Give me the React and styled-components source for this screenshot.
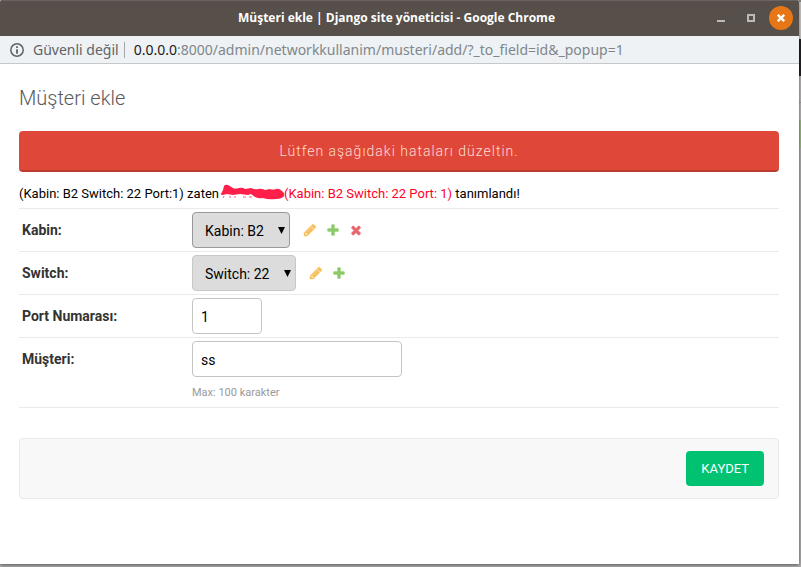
import React from "react";
import styled, { createGlobalStyle } from "styled-components";

const GlobalStyle = createGlobalStyle`
  *, *::before, *::after { box-sizing: border-box; }
  body {
    margin: 0;
    font-family: Roboto, "Liberation Sans", sans-serif;
    font-size: 13px;
    color: #000;
  }
`;

const Desktop = styled.div`
  display: flex;
  min-height: 100vh;
  padding: 0 2px 3px 0;
  background: linear-gradient(
    #8b8783 0 2px, #d4d2d0 2px 39px, #242224 39px 76px, #bdbbbc 76px 102px,
    #a09e9f 102px 103px, #bdbbbc 103px 120px, #9fbd85 120px 148px, #b3b1b2 148px 100%
  );
`;

const Window = styled.div`
  flex: 1;
  min-width: 0;
  background: #fff;
  box-shadow: 0 1px 4px rgba(0, 0, 0, 0.55);
`;

const TitleBar = styled.header`
  display: grid;
  grid-template-columns: 1fr auto 1fr;
  align-items: center;
  height: 36px;
  padding-right: 6px;
  background: #574f4a;
  box-shadow: inset 0 1px #6b635f;
  border-radius: 2px 2px 0 0;
`;

const WindowTitle = styled.div`
  grid-column: 2;
  font: 700 12px/20px "Open Sans", "Noto Sans", sans-serif;
  color: #fff;
  white-space: nowrap;
`;

const WindowControls = styled.div`
  display: flex;
  justify-content: flex-end;
  gap: 6px;
`;

const WindowButton = styled.button`
  display: grid;
  place-items: center;
  width: 24px;
  height: 24px;
  padding: 0;
  border: 0;
  border-radius: 50%;
  color: ${(p) => (p.$close ? "#fff" : "#bdb9b6")};
  background: ${(p) => (p.$close ? "#e67616" : "transparent")};
`;

const AddressBar = styled.div`
  display: flex;
  align-items: center;
  height: 28px;
  padding: 0 10px;
  background: #eef2f4;
  border-bottom: 1px solid #c6c8ca;
  font: 14px/20px "Noto Sans", sans-serif;
  color: #5f6368;
  white-space: nowrap;
`;

const Security = styled.span`
  margin-left: 9px;
  padding-right: 5px;
`;

const Divider = styled.span`
  width: 1px;
  height: 16px;
  margin-right: 9px;
  background: #a3a7aa;
`;

const Url = styled.span`
  color: #80868b;
`;

const Host = styled.span`
  color: #202124;
`;

const Content = styled.main`
  padding: 18px 20px 64px 19px;
`;

const Heading = styled.h1`
  margin: 0 0 17px;
  font-size: 20px;
  line-height: 32px;
  font-weight: 300;
  color: #5a5a5a;
`;

const ErrorBanner = styled.p`
  margin: 0 0 12px;
  padding: 10px 10px 8px;
  border-bottom: 2px solid #b93c2e;
  border-radius: 4px;
  background: #df4838;
  color: #ffdcd6;
  font-size: 14px;
  font-weight: 300;
  line-height: 21px;
  letter-spacing: 1px;
  text-align: center;
`;

const RecordError = styled.div`
  display: flex;
  align-items: center;
  height: 25px;
  padding-bottom: 5px;
  border-bottom: 1px solid #eaeaea;
  line-height: 19px;
  white-space: pre;
`;

const Duplicate = styled.span`
  display: flex;
  align-items: center;
  margin-left: 1px;
  color: #ff0026;
`;

const Row = styled.div`
  display: flex;
  align-items: flex-start;
  padding: 3px;
  border-bottom: 1px solid #eaeaea;
`;

const Label = styled.label`
  width: 170px;
  flex: none;
  font-size: 14px;
  font-weight: 700;
  line-height: 36px;
  color: #333;
`;

const Field = styled.div`
  display: flex;
  flex-direction: column;
`;

const Related = styled.div`
  display: flex;
  align-items: center;
  gap: 9px;
`;

const SelectWrap = styled.div`
  display: grid;
  align-items: center;
  margin-right: 4px;

  select, svg { grid-area: 1 / 1; }
  svg {
    justify-self: end;
    margin-right: 5px;
    pointer-events: none;
  }
`;

const Select = styled.select`
  appearance: none;
  height: 36px;
  padding: 2px 25px 0 12px;
  border: 1px solid ${(p) => (p.$active ? "#999" : "#c8c8c8")};
  border-radius: 4px;
  background: #dcdcdc;
  color: #000;
  font: 14px Roboto, sans-serif;
`;

const TextInput = styled.input`
  width: ${(p) => (p.$short ? "70px" : "210px")};
  height: 36px;
  padding: 2px 8px 0;
  border: 1px solid #c4c4c4;
  border-radius: 4px;
  background: #fff;
  color: #000;
  font: 14px Roboto, sans-serif;
`;

const Help = styled.p`
  margin: 8px 0 3px;
  font-size: 11px;
  line-height: 16px;
  color: #999;
`;

const IconLink = styled.a`
  display: flex;
  color: ${(p) => p.$tone};
`;

const SubmitRow = styled.div`
  display: flex;
  justify-content: flex-end;
  margin-top: 30px;
  padding: 12px 14px;
  border: 1px solid #eaeaea;
  border-radius: 4px;
  background: #f8f8f8;
`;

const SubmitButton = styled.button`
  height: 35px;
  padding: 0 15px;
  border: 0;
  border-radius: 4px;
  background: #00c271;
  color: #fff;
  font: 13px Roboto, sans-serif;
`;

const ICONS = {
  change: "M491 1536l91-91-235-235-91 91v107h128v128h107zm523-928q0-22-22-22-10 0-17 7l-542 542q-7 7-7 17 0 22 22 22 10 0 17-7l542-542q7-7 7-17zm-54-192l416 416-832 832h-416v-416zm683 96q0 53-37 90l-166 166-416-416 166-165q36-38 90-38 53 0 91 38l235 234q37 39 37 91z",
  add: "M1600 796v192q0 40-28 68t-68 28h-416v416q0 40-28 68t-68 28h-192q-40 0-68-28t-28-68v-416h-416q-40 0-68-28t-28-68v-192q0-40 28-68t68-28h416v-416q0-40 28-68t68-28h192q40 0 68 28t28 68v416h416q40 0 68 28t28 68z",
  remove: "M1490 1322q0 40-28 68l-136 136q-28 28-68 28t-68-28l-294-294-294 294q-28 28-68 28t-68-28l-136-136q-28-28-28-68t28-68l294-294-294-294q-28-28-28-68t28-68l136-136q28-28 68-28t68 28l294 294 294-294q28-28 68-28t68 28l136 136q28 28 28 68t-28 68l-294 294 294 294q28 28 28 68z",
};
const TONES = { change: "#f7bf5c", add: "#8acb67", remove: "#e8666b" };
const NAMES = { change: "Değiştir", add: "Ekle", remove: "Sil" };

function Action({ kind }) {
  return (
    <IconLink href="#" aria-label={NAMES[kind]} $tone={TONES[kind]}>
      <svg width="14" height="14" viewBox="0 0 1792 1792" fill="currentColor" aria-hidden="true">
        <path d={ICONS[kind]} stroke="currentColor" strokeWidth="50" />
      </svg>
    </IconLink>
  );
}

function RelatedSelect({ id, value, active, actions }) {
  return (
    <Related>
      <SelectWrap>
        <Select id={id} $active={active} defaultValue={value}>
          <option>{value}</option>
        </Select>
        <svg width="7" height="7" viewBox="0 0 7 7" aria-hidden="true">
          <path d="M0 0h7L3.5 7z" />
        </svg>
      </SelectWrap>
      {actions.map((kind) => <Action key={kind} kind={kind} />)}
    </Related>
  );
}

function Scribble() {
  return (
    <svg width="64" height="19" viewBox="0 0 64 19" overflow="visible" aria-hidden="true">
      <path
        d="M1 10l2-4 1-4q1-2 4-1l5 3q2 1 6 0t6 1l6-1q4 2 7 1t7 1l5-1q3 1 6 0t6 2q3 2 2 5-2 3-8 3-8 1-13-1-4 1-8-1l-4-3-3 1-8-1-7 1-6-1-4 1q-3 0-2-2z"
        fill="#ff1f4b"
      />
      <path d="M4 12l-1 2M10 12v2M15 12v2M23 13h3M29 13h3" fill="none" stroke="#ff5a72" />
    </svg>
  );
}

export default function App() {
  return (
    <>
      <GlobalStyle />
      <Desktop>
        <Window>
          <TitleBar>
            <WindowTitle>Müşteri ekle | Django site yöneticisi - Google Chrome</WindowTitle>
            <WindowControls>
              <WindowButton aria-label="Simge durumuna küçült">
                <svg width="8" height="8" viewBox="0 0 8 8"><path d="M0 6h8v2H0z" fill="currentColor" /></svg>
              </WindowButton>
              <WindowButton aria-label="Ekranı kapla">
                <svg width="8" height="8" viewBox="0 0 8 8"><path d="M1 1h6v6H1z" fill="none" stroke="currentColor" strokeWidth="2" /></svg>
              </WindowButton>
              <WindowButton $close aria-label="Kapat">
                <svg width="8" height="8" viewBox="0 0 8 8"><path d="M.8 .8l6.4 6.4M7.2 .8L.8 7.2" stroke="currentColor" strokeWidth="2.4" /></svg>
              </WindowButton>
            </WindowControls>
          </TitleBar>
          <AddressBar>
            <svg width="14" height="14" viewBox="0 0 14 14" aria-hidden="true">
              <circle cx="7" cy="7" r="6.2" fill="none" stroke="#5f6368" strokeWidth="1.5" />
              <path d="M6.1 3.3h1.8V5H6.1zM6.1 6.2h1.8v4.5H6.1z" fill="#5f6368" />
            </svg>
            <Security>Güvenli değil</Security>
            <Divider />
            <Url><Host>0.0.0.0</Host>:8000/admin/networkkullanim/musteri/add/?_to_field=id&amp;_popup=1</Url>
          </AddressBar>
          <Content>
            <Heading>Müşteri ekle</Heading>
            <ErrorBanner role="alert">Lütfen aşağıdaki hataları düzeltin.</ErrorBanner>
            <form onSubmit={(e) => e.preventDefault()}>
              <RecordError>
                <span>(Kabin: B2 Switch: 22 Port:1) zaten</span>
                <Duplicate><Scribble />(Kabin: B2 Switch: 22 Port: 1)</Duplicate>
                <span> tanımlandı!</span>
              </RecordError>
              <Row>
                <Label htmlFor="kabin">Kabin:</Label>
                <RelatedSelect id="kabin" value="Kabin: B2" active actions={["change", "add", "remove"]} />
              </Row>
              <Row>
                <Label htmlFor="switch">Switch:</Label>
                <RelatedSelect id="switch" value="Switch: 22" actions={["change", "add"]} />
              </Row>
              <Row>
                <Label htmlFor="port">Port Numarası:</Label>
                <TextInput id="port" $short defaultValue="1" />
              </Row>
              <Row>
                <Label htmlFor="musteri">Müşteri:</Label>
                <Field>
                  <TextInput id="musteri" defaultValue="ss" maxLength={100} />
                  <Help>Max: 100 karakter</Help>
                </Field>
              </Row>
              <SubmitRow>
                <SubmitButton type="submit">KAYDET</SubmitButton>
              </SubmitRow>
            </form>
          </Content>
        </Window>
      </Desktop>
    </>
  );
}
